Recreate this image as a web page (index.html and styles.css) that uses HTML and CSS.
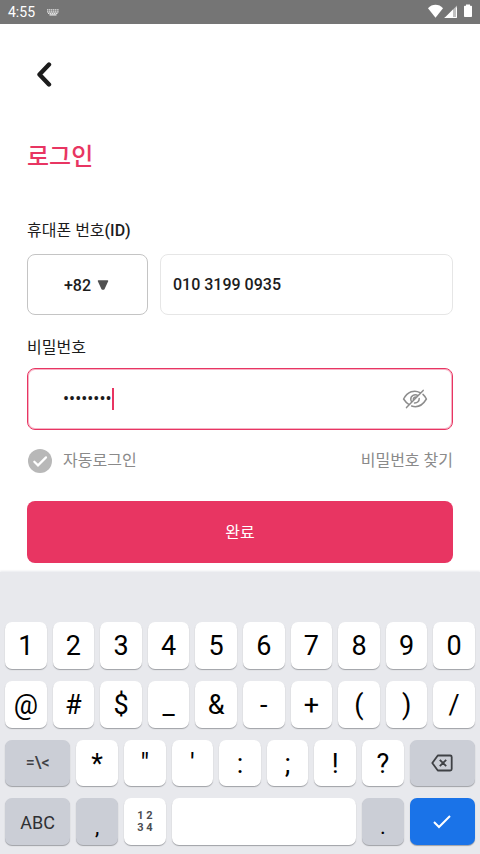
FILE: index.html
```html
<!DOCTYPE html>
<html lang="ko">
<head>
<meta charset="utf-8">
<meta name="viewport" content="width=device-width, initial-scale=1">
<title>로그인</title>
<link rel="stylesheet" href="styles.css">
</head>
<body>
<div class="status">
  <span>4:55</span>
  <svg class="status-kb" width="12" height="7" viewBox="0 0 12 7"><path d="M0 .8h12M0 2.800h12M1 4.400h10" fill="none" stroke="#fff" stroke-width="1.200" stroke-dasharray="1.400 .5" opacity=".8"/><path d="M2.500 5.900h7" stroke="#fff" stroke-width="1.100"/></svg>
  <svg class="status-signal" width="44" height="16" viewBox="0 0 44 16">
    <path d="M0 4.200C4-.4 11-.4 15 4.200L7.500 13.800z" fill="#fff"/>
    <path d="M16.500 14L29 1.500V14z" fill="#fff" opacity=".55"/>
    <path d="M16.500 14L25 5.500V14z" fill="#fff"/>
    <path d="M28.500 3.500V13.500H16.800" fill="none" stroke="#fff" stroke-width="1"/>
    <path d="M38 .5h4v1.300h1.200a.8.800 0 0 1 .8.800v9.600a.8.800 0 0 1-.8.800h-6.400a.8.800 0 0 1-.8-.8V2.600a.8.800 0 0 1 .8-.8H38z" fill="#fff"/>
  </svg>
</div>
<main class="page">
  <button class="back" type="button" aria-label="뒤로"><svg width="18" height="26" viewBox="0 0 18 26"><path d="M14 3.500L4.500 13.500l9.500 10" fill="none" stroke="#1c1c1c" stroke-width="4.400" stroke-linejoin="round" stroke-linecap="round"/></svg></button>
  <h1 class="title">로그인</h1>
  <form class="form">
    <label class="label" for="phone">휴대폰 번호<span class="strong">(ID)</span></label>
    <div class="phone-row">
      <button class="box country" type="button">+82 <svg width="12" height="12" viewBox="0 0 12 12"><path d="M1.500 2h9L6.800 10H5.200z" fill="#505050" stroke="#505050" stroke-width="1.500" stroke-linejoin="round"/></svg></button>
      <input class="box phone" id="phone" type="tel" value="010 3199 0935">
    </div>
    <label class="label label-next" for="password">비밀번호</label>
    <div class="box password">
      <input class="secret" id="password" type="password" value="password">
      <span class="caret"></span>
      <button class="eye" type="button" aria-label="비밀번호 표시"><svg width="26" height="22" viewBox="0 0 26 22" fill="none" stroke="#8c8c8c" stroke-width="1.500" stroke-linecap="round"><path d="M18 4.700C12.500 1.400 5.500 3.500 1.600 11c1.600 2.500 3.400 4.400 5.500 5.600M21 6.400c1.300 1.200 2.500 2.700 3.400 4.600-4 6.700-9.500 8.700-14.800 7M4.500 19.600L21.200 2.400M16 7.600c-3.300-2.300-7.600.2-7.200 3.900.1 1 .5 1.900 1.100 2.500M17.200 10.500c.2 2.500-2 4.700-4.700 4.500M14.600 9.300c-1.600-.9-3.500.2-3.300 2"/></svg></button>
    </div>
    <div class="options">
      <label class="auto"><input class="check" type="checkbox" checked><svg class="tick" width="24" height="24" viewBox="0 0 24 24"><circle cx="12" cy="12" r="12" fill="#b8b8b8"/><path d="M6.300 12.700l3.700 3.700 8-8" fill="none" stroke="#fff" stroke-width="2.200" stroke-linecap="round"/></svg>자동로그인</label>
      <a class="find" href="#">비밀번호 찾기</a>
    </div>
    <button class="submit" type="submit">완료</button>
  </form>
</main>
<section class="keyboard" aria-label="키보드">
  <div class="keys digits">
    <button class="key">1</button><button class="key">2</button><button class="key">3</button><button class="key">4</button><button class="key">5</button><button class="key">6</button><button class="key">7</button><button class="key">8</button><button class="key">9</button><button class="key">0</button>
  </div>
  <div class="keys digits">
    <button class="key">@</button><button class="key">#</button><button class="key">$</button><button class="key">_</button><button class="key">&amp;</button><button class="key">-</button><button class="key">+</button><button class="key">(</button><button class="key">)</button><button class="key">/</button>
  </div>
  <div class="keys symbols">
    <button class="key dark more">=\&lt;</button><button class="key">*</button><button class="key">"</button><button class="key">'</button><button class="key">:</button><button class="key">;</button><button class="key">!</button><button class="key">?</button>
    <button class="key dark icon" aria-label="지우기"><svg width="22" height="18" viewBox="0 0 22 18" fill="none" stroke="#3f4145" stroke-width="1.800"><path d="M6.800 1.500h12.400a1.500 1.500 0 0 1 1.500 1.500v12a1.500 1.500 0 0 1-1.500 1.500H6.800L1.300 9zM8.800 5.800l6.400 6.400M15.200 5.800l-6.400 6.400" stroke-linejoin="round"/></svg></button>
  </div>
  <div class="keys bottom">
    <button class="key dark abc">ABC</button><button class="key dark low">,</button><button class="key numpad"><span>1</span><span>2</span><span>3</span><span>4</span></button><button class="key" aria-label="스페이스"></button><button class="key dark low">.</button>
    <button class="key done icon" aria-label="완료"><svg width="20" height="16" viewBox="0 0 20 16"><path d="M2 8l5 5L18 2" fill="none" stroke="#fff" stroke-width="2"/></svg></button>
  </div>
</section>
</body>
</html>
```
FILE: styles.css
```css
* { box-sizing: border-box; }
body {
  margin: 0;
  min-height: 100vh;
  display: flex;
  flex-direction: column;
  background: #fff;
  color: #1c1c1c;
  font: 16px/24px Roboto, "Noto Sans CJK KR", sans-serif;
}
button, input { margin: 0; padding: 0; border: 0; font: inherit; color: inherit; background: none; outline: 0; }
svg { display: block; flex: none; }

.status {
  display: flex;
  align-items: center;
  height: 24px;
  padding: 0 8px;
  background: #757575;
  color: #fff;
  font-size: 14px;
}
.status-kb { margin-left: 12px; }
.status-signal { margin-left: auto; }

.page { padding: 26px 27px 9px; }
.back { display: flex; align-items: center; width: 48px; height: 48px; padding-left: 8px; }
.title { margin: 41px 0 44px; font-size: 24px; line-height: 36px; font-weight: 500; color: #e83562; }
.form { display: flex; flex-direction: column; }
.strong { font-weight: 500; }
.label-next { margin-top: 21px; }

.box { height: 61px; border: 1px solid #c4c4c4; border-radius: 8px; }
.phone-row { display: flex; gap: 12px; margin-top: 11px; }
.country { display: flex; align-items: center; justify-content: center; gap: 6px; flex: 0 0 121px; padding: 2px 2px 0 0; font-weight: 500; }
.country svg { margin-bottom: 2px; }
.phone { flex: 1; min-width: 0; padding: 0 12px; border-color: #e6e6e6; font-weight: 500; }
.password { display: flex; align-items: center; height: 62px; margin-top: 8px; padding: 0 24px 0 35px; border-color: #e83562; box-shadow: inset 0 0 0 1px #f6b3c5; }
.secret { field-sizing: content; max-width: 70%; font-size: 18px; }
.caret { width: 2px; height: 22px; background: #e83562; }
.eye { margin-left: auto; }

.options { display: flex; align-items: center; justify-content: space-between; margin: 19px 0 28px; color: #8a8a8a; }
.auto { display: flex; align-items: center; gap: 11px; padding-left: 1px; }
.check { position: absolute; opacity: 0; }
.find { color: inherit; text-decoration: none; }
.submit { height: 62px; padding-top: 2px; border-radius: 8px; background: #e83562; color: #fff; }

.keyboard {
  flex: 1;
  display: grid;
  grid-auto-rows: 1fr;
  gap: 12px;
  padding: 50px 5px 9px;
  background: #e8e9ed;
  box-shadow: 0 -1px 2px #e8e9ed;
}
.keys { display: grid; gap: 6px; }
.digits { grid-template-columns: repeat(10, 1fr); }
.symbols { grid-template-columns: 11fr repeat(7, 7fr) 11fr; }
.bottom { grid-template-columns: 11fr 7fr 7fr 31fr 7fr 11fr; }
.key {
  display: flex;
  align-items: center;
  justify-content: center;
  min-height: 46px;
  padding: 2px 0 0;
  border-radius: 7px;
  background: #fff;
  box-shadow: 0 1px 1px #9fa1a6;
  color: #000;
  font-size: 27px;
  line-height: 32px;
}
.icon { padding: 0; }
.dark { background: #cbced6; }
.more { padding: 0; font-size: 16px; font-weight: 500; color: #3f4145; }
.abc { font-size: 18px; color: #2f3134; }
.low { padding-top: 10px; font-size: 22px; }
.numpad {
  display: grid;
  grid-template-columns: 9px 9px;
  align-content: center;
  padding-top: 0;
  font-size: 11px;
  line-height: 12px;
  font-weight: 700;
  color: #4b4d51;
}
.done { background: #1a73e8; }
```
